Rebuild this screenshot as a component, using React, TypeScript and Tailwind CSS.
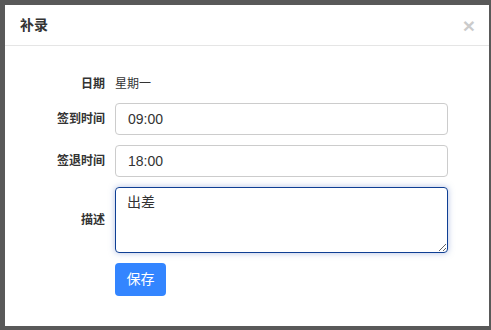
import React from 'react';

const Row: React.FC<{ label: string; children: React.ReactNode; className?: string }> = ({ label, children, className }) => (
  <div className={`flex items-center ${className ?? ''}`}>
    <label className="w-[110px] shrink-0 pr-[10px] text-right text-[12px] font-bold text-[#333]">{label}</label>
    {children}
  </div>
);

export default function App() {
  return (
    <div
      className="h-[330px] w-[491px] overflow-hidden bg-[#595959] pl-[5px] pt-[5px]"
      style={{ fontFamily: '"Liberation Sans", "Noto Sans CJK SC", sans-serif' }}
    >
      <div className="flex h-[321px] w-[484px] flex-col bg-white">
        <div className="flex h-[41px] shrink-0 items-center justify-between border-b border-[#e5e5e5] pl-[15px] pr-[14px]">
          <h4 className="text-[14px] font-bold text-[#333]">补录</h4>
          <button className="text-[21px] leading-none font-bold text-black opacity-20">×</button>
        </div>
        <div className="flex flex-col pt-[22px]">
          <Row label="日期" className="h-[32px]">
            <span className="text-[12px] text-[#333]">星期一</span>
          </Row>
          <Row label="签到时间" className="mt-[3px]">
            <input
              readOnly
              value="09:00"
              className="h-[32px] w-[333px] rounded-[4px] border border-[#ccc] px-[12px] text-[14px] text-[#333] outline-none"
            />
          </Row>
          <Row label="签退时间" className="mt-[10px]">
            <input
              readOnly
              value="18:00"
              className="h-[32px] w-[333px] rounded-[4px] border border-[#ccc] px-[12px] text-[14px] text-[#333] outline-none"
            />
          </Row>
          <Row label="描述" className="mt-[10px]">
            <textarea
              defaultValue="出差"
              className="h-[66px] w-[333px] rounded-[4px] border border-[#0f3f94] px-[11px] py-[4px] text-[14px] text-[#333] shadow-[0_0_6px_rgba(102,130,200,0.5)] outline-none"
            />
          </Row>
          <div className="mt-[10px] pl-[110px]">
            <button className="h-[33px] w-[51px] rounded-[4px] bg-[#3385ff] text-[14px] text-white">保存</button>
          </div>
        </div>
      </div>
    </div>
  );
}
